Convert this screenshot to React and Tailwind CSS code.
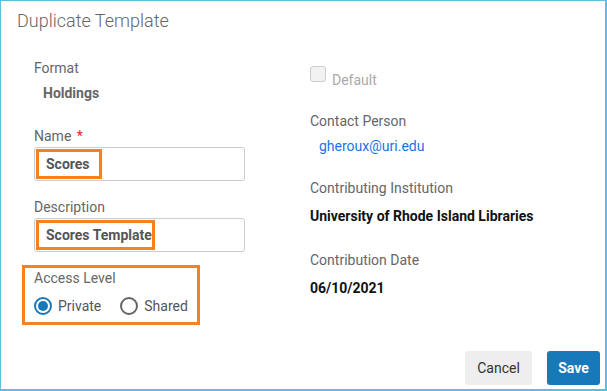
import React from "react";

const Label = ({ children, className = "" }) => (
  <div className={`text-[14px] leading-5 text-[#666] ${className}`}>{children}</div>
);

const Radio = ({ checked, label }) => (
  <label className="flex items-center">
    <span
      className={`w-[18px] h-[18px] rounded-full border-2 flex items-center justify-center bg-white ${
        checked ? "border-[#1779ba]" : "border-[#666]"
      }`}
    >
      {checked && <span className="w-[10px] h-[10px] rounded-full bg-[#1779ba]" />}
    </span>
    <span className="ml-[6px] text-[14px] leading-5 text-[#555]">{label}</span>
  </label>
);

const HighlightedInput = ({ value, boxWidth, className = "" }) => (
  <div
    className={`w-[211px] h-[34px] border border-[#ccc] rounded-[3px] bg-white flex items-center pl-[1px] ${className}`}
  >
    <span
      className={`h-[30px] border-[3px] border-[#f5821f] flex items-center pl-[7px] text-[14px] font-bold text-[#555] whitespace-nowrap ${boxWidth}`}
    >
      {value}
    </span>
  </div>
);

export default function App() {
  return (
    <div
      className="w-[607px] h-[391px] bg-white border border-[#5bc0de] border-r-2 border-b-2 flex flex-col"
      style={{ fontFamily: "Roboto, 'Liberation Sans', sans-serif" }}
    >
      {/* header */}
      <div className="pl-[16px] pt-[7px] h-[33px] text-[18px] leading-[26px] font-light text-[#666]">
        Duplicate Template
      </div>

      {/* body */}
      <div className="flex flex-1">
        {/* left column */}
        <div className="pl-[33px] w-[309px]">
          <Label className="mt-[24px]">Format</Label>
          <div className="mt-[5px] pl-[9px] text-[14px] leading-5 font-bold text-[#666]">Holdings</div>

          <Label className="mt-[23px]">
            Name <span className="ml-[2px] text-[#e0261c]">*</span>
          </Label>
          <HighlightedInput value="Scores" boxWidth="w-[66px]" className="mt-[1px]" />

          <Label className="mt-[16px]">Description</Label>
          <HighlightedInput value="Scores Template" boxWidth="w-[119px]" className="mt-[1px]" />

          <div className="mt-[13px] -ml-[12px] w-[178px] border-[3px] border-[#f5821f] pl-[9px] pb-[6px]">
            <Label>Access Level</Label>
            <div className="mt-[8px] flex items-center gap-[19px]">
              <Radio checked label="Private" />
              <Radio label="Shared" />
            </div>
          </div>
        </div>

        {/* right column */}
        <div className="flex-1">
          <div className="mt-[32px] flex items-start">
            <span className="w-[16px] h-[16px] rounded-[3px] border border-[#ccc] bg-[#f2f2f2]" />
            <span className="ml-[6px] mt-[4px] text-[14px] leading-5 text-[#aaa]">Default</span>
          </div>

          <Label className="mt-[21px]">Contact Person</Label>
          <div className="mt-[5px] pl-[9px] text-[14px] leading-5 text-[#1a73e8]">gheroux@uri.edu</div>

          <Label className="mt-[22px]">Contributing Institution</Label>
          <div className="mt-[8px] text-[14px] leading-5 font-bold text-[#111]">
            University of Rhode Island Libraries
          </div>

          <Label className="mt-[24px]">Contribution Date</Label>
          <div className="mt-[8px] text-[14px] leading-5 font-bold text-[#111]">06/10/2021</div>
        </div>
      </div>

      {/* footer */}
      <div className="flex justify-end gap-[15px] pr-[5px] pb-[4px]">
        <button className="w-[67px] h-[34px] rounded-[3px] bg-[#eeeeee] text-[14px] text-[#333]">
          Cancel
        </button>
        <button className="w-[53px] h-[34px] rounded-[3px] bg-[#1779ba] text-[14px] font-bold text-white">
          Save
        </button>
      </div>
    </div>
  );
}
